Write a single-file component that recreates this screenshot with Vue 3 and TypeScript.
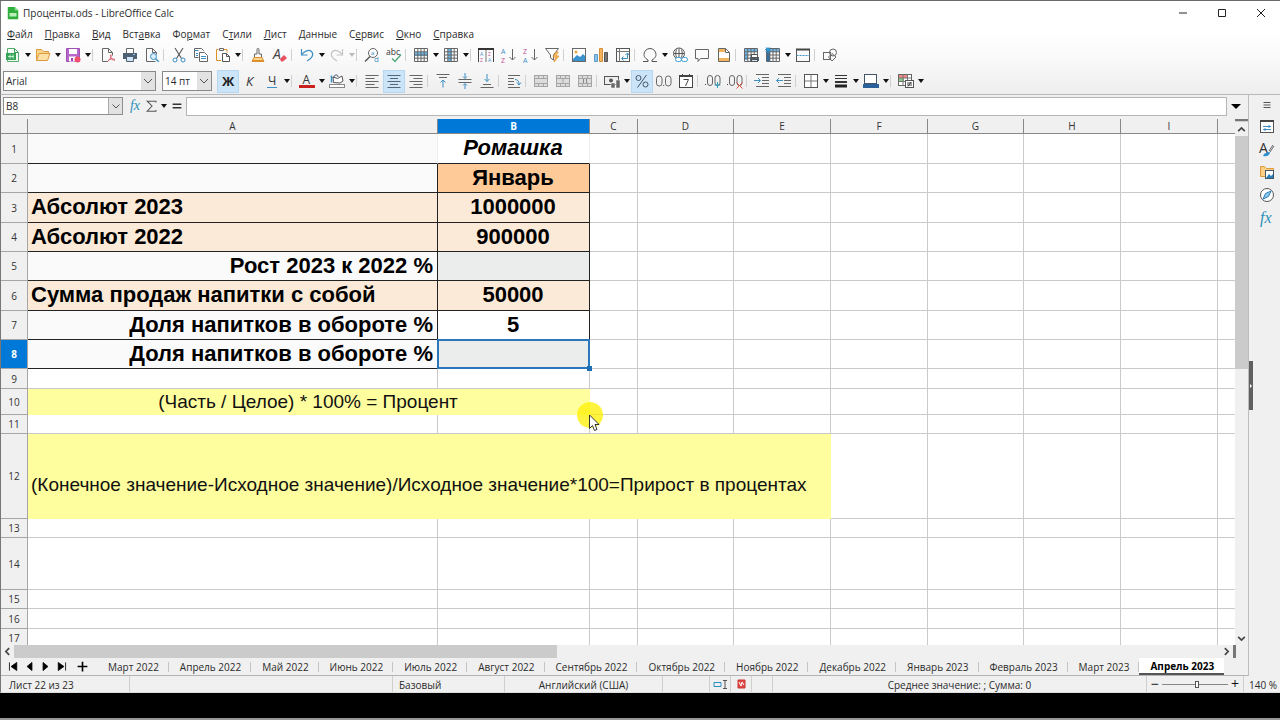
<script setup lang="ts">
import { ref } from 'vue'

interface Tool { icon?: string; label?: string; menu?: boolean; on?: boolean; sep?: boolean; off?: boolean }
interface Cell { text?: string; cls?: string; span?: number }
interface Row { n: number; h: number; cells: Cell[] }

const P = (d: string, c = '#555', w = 1, f = 'none') => `<path d="${d}" stroke="${c}" stroke-width="${w}" fill="${f}"/>`
const R = (x: number, y: number, w: number, h: number, c = '#555', f = 'none') =>
  `<rect x="${x}" y="${y}" width="${w}" height="${h}" stroke="${c}" fill="${f}"/>`
const T = (x: number, y: number, s: number, t: string, c = '#444', extra = '') =>
  `<text x="${x}" y="${y}" font-size="${s}" font-family="Open Sans, sans-serif" fill="${c}" ${extra}>${t}</text>`
const BLUE = '#3d8fc4'
const gridLines = P('M1.5 1.5h13v13h-13zM1.5 4.8h13M1.5 8h13M1.5 11.2h13M4.8 1.5v13M8 1.5v13M11.2 1.5v13', '#666')
const merge = R(1.5, 2.5, 13, 11, '#a5a5a5', '#dcdcdc') + P('M1.5 5.5h13M1.5 10.5h13M5.5 2.5v3M10.5 2.5v3M5.5 10.5v3M10.5 10.5v3', '#a5a5a5')

const icons: Record<string, string> = {
  new: P('M2.5 1.5h7l4 4v9h-11z', '#5aa96f', 1, '#f2fbf4') + P('M9.5 1.5v4h4', '#2f9e52') + '<path d="M1 6h10v7H1z" fill="#35a457"/>' + P('M3 9.500h6M5 7.500v4M8 7.500v4', '#c9efd2'),
  open: P('M1.500 13.500v-11h5l2 2h5v2', '#dd9a3c', 1, '#fbd58c') + P('M1.500 13.500l2.500-7h11l-2.500 7z', '#dd9a3c', 1, '#fde0a6'),
  save: P('M1.500 1.500h13v13h-13z', '#a04fb5', 1, '#b668ca') + '<path d="M4 2h8v5H4zM4 9.500h7v5H4z" fill="#fff"/><path d="M6 11h2v3H6z" fill="#9a3fae"/><circle cx="12.500" cy="12.500" r="3" fill="#f0506e"/>',
  pdf: P('M8 14.500h-5.500v-13h6l4 4v3M8.500 1.500v4h4', '#666') + P('M7.500 14.500c3-2 4-5 3.500-7M10.500 8c0 4 2 5.500 4.500 5M8 13.500c2-2 5-2 7-1', '#d8606c'),
  print: '<path d="M1 6h14v6H1z" fill="#4f6070"/>' + P('M4.500 6V1.500h7V6', '#666', 1, '#fff') + P('M4.500 9.500h7v5h-7z', '#4f6070', 1, '#cfe4f4') + '<path d="M11 7h2v1h-2z" fill="#7fd1ff"/>',
  preview: P('M11.500 14.500h-9v-13h6l4 4v2M8.500 1.500v4h4', '#666') + '<circle cx="9.500" cy="9.500" r="3" fill="#d8eefa" stroke="#3d8fc4"/>' + P('M11.700 11.700l3 3', BLUE, 1.500),
  cut: P('M4 1l6.500 10.500M12 1L5.500 11.500', '#555', 1.100) + '<circle cx="4" cy="13" r="2" fill="none" stroke="#3d8fc4"/><circle cx="12" cy="13" r="2" fill="none" stroke="#3d8fc4"/>',
  copy: P('M10.500 4V3.500l-2-2h-7v9h4', '#666') + P('M1.500 3.500h4M3 6.500h2M3 8.500h2', BLUE) + P('M6.500 5.500h5l3 3v6h-8z', '#666', 1, '#fff') + P('M8 9.500h5M8 11.500h5', BLUE),
  paste: P('M6 13.500H1.500v-11h2M9 2.500h3v3', '#dd8f2c') + P('M4.500 1.500h4v2h-4z', '#666') + P('M7.500 6.500h4l3 3v5h-7zM11.500 6.500v3h3', '#555', 1, '#fff'),
  clone: P('M7 7V2.500a1 1 0 012 0V7h2.500v3.500h-7V7z', '#666') + P('M4 10.500l-2 4h12l-2-4z', '#dd8f2c', 1, '#fbd58c') + P('M2 13.500h12', '#dd8f2c', 1),
  clear: T(1, 12, 14, 'A', '#444', 'font-style="italic"') + '<path d="M8 12l4-4 3 3-4 3.500h-2z" fill="#e8505f"/>',
  undo: P('M2.500 2v6h6', BLUE, 1.200) + P('M2.500 8C5 4 10 2 12.500 4.500s1 7-4.500 9.500', BLUE, 1.200),
  redo: P('M13.500 2v6h-6', '#c4c4c4', 1.200) + P('M13.500 8C11 4 6 2 3.500 4.500s-1 7 4.500 9.500', '#c4c4c4', 1.200),
  find: '<circle cx="9" cy="6" r="4.500" fill="none" stroke="#666"/>' + P('M6 9.500l-5 5', '#555', 1.500) + T(7, 8, 6, 'a', BLUE) + T(10, 15, 8, 'd', BLUE),
  spell: T(0, 8, 8.5, 'abc', '#333') + P('M6 11.500l3 3 6-7', '#4aa878', 1.300),
  rows: '<path d="M2 5h12v4H2z" fill="#6db9ea"/>' + gridLines,
  cols: '<path d="M5 2h4v12H5z" fill="#6db9ea"/>' + gridLines,
  sort: P('M.5 15V2.500h15V15', '#444') + P('M0 2h16', '#333', 2) + P('M8 3v12', '#777') + T(2, 8.5, 5, 'A', BLUE) + T(2, 15, 5, 'Z', '#c6529a') + T(10, 8.5, 5, 'Z', '#c6529a') + T(10, 15, 5, 'A', BLUE),
  asc: T(1, 6.500, 7, 'A', BLUE) + T(1, 15.500, 7, 'Z', '#c6529a') + P('M12.500 2v11M9.500 10l3 3 3-3', '#666'),
  desc: T(1, 6.500, 7, 'Z', '#c6529a') + T(1, 15.500, 7, 'A', BLUE) + P('M12.500 2v11M9.500 10l3 3 3-3', '#666'),
  filter: P('M1.500 1.500h13l-5 6.500v5l-3-2V8z', '#666') + P('M12 5l-3 5h3l-2 5 5-6h-3l2-4z', '#dd8f2c', .8, '#fbc46a'),
  image: R(1.5, 1.5, 13, 13, '#666', '#fff') + '<path d="M2 12l4-4 3 2L12 7l2 2v5H2z" fill="#3a92cf"/><circle cx="5" cy="5" r="1.500" fill="#f1a33c"/>',
  chart: '<path d="M1.500 7.500h3v7h-3z" fill="#8bc3ea" stroke="#5a9cc8"/><path d="M6.500 1.500h3v13h-3z" fill="#f4b35c" stroke="#d08f3a"/><path d="M11.500 5.500h3v9h-3z" fill="#777" stroke="#555"/>',
  pivot: R(1.5, 1.5, 13, 13) + P('M1.500 4.500h13M4.500 1.500v13', '#777') + P('M7 11.500h5.500V6.500M10.500 8l2-2 1.500 2M8.500 9.500l-2 2 2 2', BLUE),
  omega: P('M1 14.500h5v-1.500C2.500 11 2 9 2 7.500a6 6 0 0112 0c0 1.500-.5 3.500-4 5.500v1.500h5', '#555', 1),
  link: '<circle cx="7" cy="6.500" r="5.500" fill="#fff" stroke="#555"/>' + P('M2 6.500h10M7 1.500v10M4.500 2.500c-1 3-1 5 0 8M9.500 2.500c1 3 1 5 0 8', '#555') + '<rect x="3.500" y="10.500" width="6" height="4" rx="2" fill="#fff" stroke="#3d9fd4"/><rect x="9.500" y="10.500" width="6" height="4" rx="2" fill="#fff" stroke="#3d9fd4"/>',
  comment: P('M1.500 2.500h13v9h-8l-2.500 3v-3h-2.500z', '#666'),
  header: P('M2.500 1.500h7l4 4v9h-11z', '#666', 1, '#fff') + '<path d="M3 2h6v3H3zM3 11h10v3H3z" fill="#f0b45c"/>' + P('M9.500 1.500v4h4', '#666'),
  area: '<path d="M2 2h12v3H2zM2 2h3v11H2z" fill="#6db9ea"/>' + gridLines + '<path d="M7 10h9v4H7z" fill="#4f6070"/>' + R(8.5, 7.5, 6, 3, '#555', '#fff') + R(8.5, 12.5, 6, 2, '#555', '#cfe4f4'),
  freeze: '<path d="M2 2h3v12H2z" fill="#1e74b8"/><path d="M5 2h9v3H5z" fill="#6db9ea"/>' + gridLines + P('M3 0v6M0 2.500h6M1 .5l4 4M5 .5l-4 4', '#2a9fe0'),
  split: R(1.5, 2.5, 13, 12) + P('M1 2.500h14', '#444', 2) + '<path d="M1.500 8.500h13" stroke="#3d8fc4" stroke-dasharray="2 1"/>',
  draw: R(1.5, 5.5, 7, 7, '#666') + '<circle cx="11" cy="5.500" r="3.500" fill="none" stroke="#666"/>' + P('M10 6.500l4 3.500-4 4-3.500-4z', '#666'),
  bold: T(2, 12.5, 13, 'Ж', '#222', 'font-weight="700"'),
  italic: T(4, 12.5, 13, 'К', '#333', 'font-style="italic"'),
  underline: T(4, 12, 12, 'Ч', '#333') + P('M3 14.500h10', BLUE),
  fcolor: T(3.5, 11, 12, 'A', '#333') + '<path d="M0 12h16v3H0z" fill="#c9211e"/>',
  bcolor: P('M4 4l4.500 1.500L13 3l1 5-3 2-6.500-.5z', '#555', 1, '#fff') + P('M2.500 2.500v7', '#3d8fc4', 1.5) + P('M4 5c2-4 5-4 5-1', '#456') + R(.5, 11.5, 15, 3, '#888', '#fff'),
  left: P('M1.500 2.500h13M1.500 5.500h9M1.500 8.500h13M1.500 11.500h9M1.500 14.500h13', '#666'),
  center: P('M1.500 2.500h13M4 5.500h8M1.500 8.500h13M4 11.500h8M1.500 14.500h13', '#567'),
  right: P('M1.500 2.500h13M5.500 5.500h9M1.500 8.500h13M5.500 11.500h9M1.500 14.500h13', '#666'),
  top: P('M1.500 1.500h13M4 4.500h8', '#666') + P('M8 14.500V7M5.500 9.500L8 7l2.500 2.500', BLUE),
  mid: P('M1.500 6.500h13M1.500 9.500h13', '#666') + P('M8 0v5M6 3.500l2 2 2-2M8 16v-5M6 12.500l2-2 2 2', BLUE),
  bot: P('M4 11.500h8M1.500 14.500h13', '#666') + P('M8 1v7.500M5.500 6L8 8.500 10.500 6', BLUE),
  wrap: P('M2 2.500h12M2 5.500h6M2 8.500h6M2 11.500h6M2 14.500h12', '#666') + P('M9 6.500c3 0 4 2 4 5M11 9.500l2 2.500 2-2.500', BLUE),
  merge, merge2: merge + P('M8 6v4', '#a5a5a5'), merge3: merge + P('M6.500 6v4M9.500 6v4', '#888'),
  money: R(.5, 3.5, 14, 8, '#555', '#eee') + '<circle cx="7" cy="7.500" r="2" fill="#555"/><path d="M7 10h4v5H7zM12 7h4v8h-4z" fill="#666" stroke="#fff" stroke-width=".5"/>',
  percent: '<circle cx="4.500" cy="5" r="2.500" fill="none" stroke="#456"/><circle cx="11.500" cy="11.500" r="2.500" fill="none" stroke="#456"/>' + P('M12.500 2l-9 12.500', '#456'),
  number: '<rect x=".5" y="3" width="5.500" height="10" rx="2.700" fill="none" stroke="#666"/><rect x="9.500" y="3" width="5.500" height="10" rx="2.700" fill="none" stroke="#666"/><path d="M7.200 12h1v1h-1z" fill="#444"/>',
  date: R(1.5, 2.5, 13, 12, '#444', '#fff') + P('M1 3h14', '#444', 2) + P('M4.500 1v3M11.500 1v3', '#444') + P('M5.500 6.500h5l-3 6.500', '#444'),
  adddec: '<path d="M0 11h1v1H0z" fill="#444"/><rect x="2.500" y="2.500" width="5" height="10" rx="2.500" fill="none" stroke="#666"/><rect x="10" y="2.500" width="5" height="10" rx="2.500" fill="none" stroke="#666"/>' + P('M12.500 9v6M9.500 12h6', '#2a9fc0'),
  deldec: '<path d="M0 11h1v1H0z" fill="#444"/><rect x="2.500" y="2.500" width="5" height="10" rx="2.500" fill="none" stroke="#666"/><rect x="10" y="2.500" width="5" height="10" rx="2.500" fill="none" stroke="#666"/>' + P('M9.500 9.500l6 6M15.500 9.500l-6 6', '#e0503f'),
  indent: P('M2 1.500h13M8 4.500h7M8 7.500h7M8 10.500h7M2 13.500h13', '#666') + P('M0 7.500h6M4 5l2.500 2.500L4 10', BLUE),
  dedent: P('M2 1.500h13M8 4.500h7M8 7.500h7M8 10.500h7M2 13.500h13', '#666') + P('M7 7.500H.5M3 5L.5 7.500 3 10', BLUE),
  borders: R(1.5, 1.5, 13, 13, '#555', '#fff') + P('M8 2v12M2 8h12', '#777'),
  style: P('M2 2.500h12M2 5.500h12', '#333') + P('M2 9h12', '#333', 2) + P('M2 13h12', '#222', 3),
  bordercolor: R(1.5, 1.5, 12, 9, '#456', '#fff') + '<path d="M0 11h16v4H0z" fill="#2a6099"/>',
  cond: R(.5, 1.5, 13, 11, '#666', '#fff') + '<path d="M1 2h9v3H1z" fill="#e88"/><path d="M1 5h5v3H1z" fill="#8c8"/>' + P('M.5 5h13M.5 8.500h13M5 1.500v11M9.500 1.500v11', '#777') + R(7.5, 7.5, 8, 7, '#555', '#fff') + P('M9 10h5M9 12h5M13 9l-3 4.500', '#444'),
  menu: P('M4.500 5.500h7M4.500 8h7M4.500 10.500h7', '#555'),
  props: R(1.5, 2.5, 13, 12, '#555', '#fff') + P('M1 3h14', '#444', 2) + P('M4 8.500h8M4 11.500h8M10 7v3M6 10v3', BLUE),
  styles: T(0, 12, 14, 'A', '#333') + P('M15 5l-4 6M14 4l-4 6', '#666') + '<path d="M4 15c1-3 4-4 7-4 0 3-3 5-7 4z" fill="#2a8fd0"/>',
  gallery: P('M1.500 12.500v-10h4l2 2h7v8z', '#dd9a3c', 1, '#fbcf85') + R(6.5, 6.5, 8, 8, '#456', '#fff') + '<path d="M7 14l3-4 2 2 2-2v4z" fill="#2a7fb8"/>',
  navigator: '<circle cx="8" cy="8" r="6.500" fill="#fff" stroke="#555"/>' + P('M12 4l-2.500 5.500L4 12l2.500-5.500z', '#2a7fb8', 1, '#8fc7ea'),
  fx: `<text x="1" y="13" font-size="16" font-style="italic" font-family="Liberation Serif, serif" fill="#2a8fb8">fx</text>`,
  sum: P('M12.500 4V2.500h-10l5.500 5.500-5.500 6h10v-1.500', '#555', 1.2),
  equals: P('M3 6h10M3 10h10', '#333', 1.5),
}

const sep: Tool = { sep: true }
const t = (icon: string, label: string, menu = false): Tool => ({ icon, label, menu })
const standard: Tool[] = [
  t('new', 'Создать', true), t('open', 'Открыть', true), t('save', 'Сохранить', true), sep,
  t('pdf', 'PDF'), t('print', 'Печать'), t('preview', 'Просмотр'), sep,
  t('cut', 'Вырезать'), t('copy', 'Копировать'), t('paste', 'Вставить', true), sep,
  t('clone', 'Копировать формат'), t('clear', 'Очистить'), sep,
  t('undo', 'Отменить', true), { icon: 'redo', label: 'Вернуть', menu: true, off: true }, sep,
  t('find', 'Найти'), t('spell', 'Орфография'), sep,
  t('rows', 'Строка', true), t('cols', 'Столбец', true), sep,
  t('sort', 'Сортировка'), t('asc', 'По возрастанию'), t('desc', 'По убыванию'), t('filter', 'Автофильтр'), sep,
  t('image', 'Изображение'), t('chart', 'Диаграмма'), t('pivot', 'Сводная таблица'), sep,
  t('omega', 'Символ', true), t('link', 'Гиперссылка'), t('comment', 'Комментарий'), t('header', 'Колонтитулы'), sep,
  t('area', 'Область печати'), t('freeze', 'Закрепить', true), t('split', 'Разбить окно'), sep, t('draw', 'Рисование'),
]
const formatting: Tool[] = [
  { icon: 'bold', label: 'Жирный', on: true }, t('italic', 'Курсив'), t('underline', 'Подчёркнутый', true), sep,
  t('fcolor', 'Цвет шрифта', true), t('bcolor', 'Цвет фона', true), sep,
  t('left', 'По левому краю'), { icon: 'center', label: 'По центру', on: true }, t('right', 'По правому краю'), sep,
  t('top', 'По верху'), t('mid', 'По середине'), t('bot', 'По низу'), sep,
  t('wrap', 'Перенос'), sep,
  t('merge', 'Объединить'), t('merge2', 'Объединить ячейки'), t('merge3', 'Разъединить'), sep,
  t('money', 'Денежный', true), { icon: 'percent', label: 'Процентный', on: true }, t('number', 'Числовой'), t('date', 'Дата'), sep,
  t('adddec', 'Добавить разряд'), t('deldec', 'Удалить разряд'), sep,
  t('indent', 'Увеличить отступ'), t('dedent', 'Уменьшить отступ'), sep,
  t('borders', 'Обрамление', true), t('style', 'Стиль линий', true), t('bordercolor', 'Цвет линий', true), sep,
  t('cond', 'Условное форматирование', true),
]
// [before, access key, after]
const menus = [
  ['', 'Ф', 'айл'], ['', 'П', 'равка'], ['', 'В', 'ид'], ['Вст', 'а', 'вка'], ['Фо', 'р', 'мат'], ['С', 'т', 'или'],
  ['', 'Л', 'ист'], ['', 'Д', 'анные'], ['С', 'е', 'рвис'], ['', 'О', 'кно'], ['', 'С', 'правка'],
]
const columns = ['A', 'B', 'C', 'D', 'E', 'F', 'G', 'H', 'I', '']
const e = (n: number): Cell[] => Array.from({ length: n }, () => ({}))
const rows: Row[] = [
  { n: 1, h: 30, cells: [{ cls: 'light framed-b' }, { text: 'Ромашка', cls: 'big mid it framed-b' }, ...e(8)] },
  { n: 2, h: 29, cells: [{ cls: 'light framed' }, { text: 'Январь', cls: 'big mid orange framed' }, ...e(8)] },
  { n: 3, h: 30, cells: [{ text: 'Абсолют 2023', cls: 'big peach framed' }, { text: '1000000', cls: 'big mid peach framed' }, ...e(8)] },
  { n: 4, h: 29, cells: [{ text: 'Абсолют 2022', cls: 'big peach framed' }, { text: '900000', cls: 'big mid peach framed' }, ...e(8)] },
  { n: 5, h: 29, cells: [{ text: 'Рост 2023 к 2022 %', cls: 'big end light framed' }, { cls: 'grey framed' }, ...e(8)] },
  { n: 6, h: 30, cells: [{ text: 'Сумма продаж напитки с собой', cls: 'big peach framed' }, { text: '50000', cls: 'big mid peach framed' }, ...e(8)] },
  { n: 7, h: 29, cells: [{ text: 'Доля напитков в обороте %', cls: 'big end light framed' }, { text: '5', cls: 'big mid framed' }, ...e(8)] },
  { n: 8, h: 29, cells: [{ text: 'Доля напитков в обороте %', cls: 'big end light framed' }, { cls: 'grey framed current' }, ...e(8)] },
  { n: 9, h: 20, cells: e(10) },
  { n: 10, h: 26, cells: [{ text: '(Часть / Целое) * 100% = Процент', cls: 'note mid', span: 2 }, ...e(8)] },
  { n: 11, h: 19, cells: e(10) },
  { n: 12, h: 85, cells: [{ text: '(Конечное значение-Исходное значение)/Исходное значение*100=Прирост в процентах', cls: 'note low', span: 5 }, ...e(5)] },
  { n: 13, h: 19, cells: e(10) },
  { n: 14, h: 52, cells: e(10) },
  { n: 15, h: 19, cells: e(10) },
  { n: 16, h: 20, cells: e(10) },
  { n: 17, h: 19, cells: e(10) },
]
const sheets = ['Март 2022', 'Апрель 2022', 'Май 2022', 'Июнь 2022', 'Июль 2022', 'Август 2022', 'Сентябрь 2022', 'Октябрь 2022',
  'Ноябрь 2022', 'Декабрь 2022', 'Январь 2023', 'Февраль 2023', 'Март 2023', 'Апрель 2023']
const activeSheet = ref('Апрель 2023')
const side = [['menu', 'Меню'], ['props', 'Свойства'], ['styles', 'Стили'], ['gallery', 'Галерея'], ['navigator', 'Навигатор'], ['fx', 'Функции']]
const nav = [
  ['Первый лист', 'M3 3v10M12 3v10L5 8z'], ['Предыдущий лист', 'M11 3v10L5 8z'],
  ['Следующий лист', 'M5 3v10l6-5z'], ['Последний лист', 'M4 3v10l7-5zM13 3v10'],
]
const zoom = ref(54)
const address = ref('B8')
const formula = ref('')
</script>

<template>
  <div class="window">
    <header class="chrome">
      <div class="title">
        <svg class="doc" viewBox="0 0 16 16"><path d="M2 1h8l4 4v10H2z" fill="#2fae3e" /><path d="M10 1v4h4z" fill="#8be08f" /><path d="M4 8h8v4H4z" fill="#b8f0b8" /></svg>
        <span class="name">Проценты.ods - LibreOffice Calc</span>
        <button class="win" aria-label="Свернуть"><svg viewBox="0 0 12 12"><path d="M2 6h8" /></svg></button>
        <button class="win" aria-label="Развернуть"><svg viewBox="0 0 12 12"><path d="M2.500 2.500h7v7h-7z" /></svg></button>
        <button class="win" aria-label="Закрыть"><svg viewBox="0 0 12 12"><path d="M2 2l8 8M10 2l-8 8" /></svg></button>
      </div>
      <nav class="menus">
        <button v-for="m in menus" :key="m.join('')">{{ m[0] }}<u>{{ m[1] }}</u>{{ m[2] }}</button>
      </nav>
      <div class="bar">
        <template v-for="(i, k) in standard" :key="k">
          <span v-if="i.sep" class="sep"></span>
          <template v-else>
            <button class="tool" :aria-label="i.label"><svg viewBox="0 0 16 16" v-html="icons[i.icon!]"></svg></button>
            <button v-if="i.menu" class="drop" :class="{ off: i.off }" :aria-label="i.label + ': меню'"></button>
          </template>
        </template>
      </div>
      <div class="bar second">
        <select class="combo font" aria-label="Шрифт"><option>Arial</option></select>
        <select class="combo size" aria-label="Размер шрифта"><option>14 пт</option></select>
        <template v-for="(i, k) in formatting" :key="k">
          <span v-if="i.sep" class="sep"></span>
          <template v-else>
            <button class="tool" :class="{ on: i.on }" :aria-label="i.label"><svg viewBox="0 0 16 16" v-html="icons[i.icon!]"></svg></button>
            <button v-if="i.menu" class="drop" :aria-label="i.label + ': меню'"></button>
          </template>
        </template>
      </div>
    </header>

    <div class="work">
      <main class="main">
        <div class="formula">
          <div class="address">
            <input v-model="address" aria-label="Адрес ячейки">
            <button aria-label="Список имён"><svg viewBox="0 0 10 10"><path d="M1.500 3.500L5 7l3.500-3.500" /></svg></button>
          </div>
          <button class="fn" aria-label="Мастер функций"><svg viewBox="0 0 16 16" v-html="icons.fx"></svg></button>
          <button class="fn" aria-label="Сумма"><svg viewBox="0 0 16 16" v-html="icons.sum"></svg></button>
          <button class="drop" aria-label="Выбор функции"></button>
          <button class="fn eq" aria-label="Формула"><svg viewBox="0 0 16 16" v-html="icons.equals"></svg></button>
          <input v-model="formula" class="line" aria-label="Строка ввода">
          <button class="expand" aria-label="Развернуть строку"></button>
        </div>

        <div class="view">
          <div class="sheet">
            <table>
              <colgroup>
                <col class="c-head"><col class="c-a"><col class="c-b"><col class="c-c">
                <col class="c-s"><col class="c-n"><col class="c-n"><col class="c-s"><col class="c-n"><col class="c-n"><col>
              </colgroup>
              <thead>
                <tr><th></th><th v-for="c in columns" :key="c" scope="col" :class="{ sel: c === 'B' }">{{ c }}</th></tr>
              </thead>
              <tbody>
                <tr v-for="r in rows" :key="r.n" :style="{ height: r.h + 'px' }">
                  <th scope="row" :class="{ sel: r.n === 8 }">{{ r.n }}</th>
                  <td v-for="(c, k) in r.cells" :key="k" :class="c.cls" :colspan="c.span">{{ c.text }}</td>
                </tr>
              </tbody>
            </table>
            <div class="pointer">
              <svg viewBox="0 0 32 36"><circle cx="15" cy="14" r="13" fill="#fdf000" opacity=".75" /><path d="M14.500 14v13.500l3-3 2 5 2.500-1-2-5h4z" fill="#fff" stroke="#333" /></svg>
            </div>
          </div>
          <div class="vscroll">
            <span class="splitter"></span>
            <button aria-label="Вверх"><svg viewBox="0 0 10 10"><path d="M2 6.500l3-3 3 3" /></svg></button>
            <span class="track"><span class="thumb"></span></span>
            <button aria-label="Вниз"><svg viewBox="0 0 10 10"><path d="M2 3.500l3 3 3-3" /></svg></button>
          </div>
        </div>

        <div class="hscroll">
          <button aria-label="Влево"><svg viewBox="0 0 10 10"><path d="M6.500 2l-3 3 3 3" /></svg></button>
          <span class="track"><span class="thumb"></span></span>
          <button aria-label="Вправо"><svg viewBox="0 0 10 10"><path d="M3.500 2l3 3-3 3" /></svg></button>
          <span class="splitter"></span>
        </div>

        <div class="tabs">
          <button v-for="n in nav" :key="n[0]" class="nav" :aria-label="n[0]"><svg viewBox="0 0 16 16"><path :d="n[1]" /></svg></button>
          <button class="nav add" aria-label="Добавить лист"><svg viewBox="0 0 16 16"><path d="M8 2v12M2 8h12" /></svg></button>
          <button v-for="s in sheets" :key="s" class="tab" :class="{ active: s === activeSheet }" @click="activeSheet = s">{{ s }}</button>
        </div>
      </main>
      <aside class="side">
        <button v-for="s in side" :key="s[0]" :aria-label="s[1]"><svg viewBox="0 0 16 16" v-html="icons[s[0]]"></svg></button>
        <span class="handle"></span>
      </aside>
    </div>

    <footer class="status">
      <span class="s-sheet">Лист 22 из 23</span>
      <span class="s-find"></span>
      <span class="s-style">Базовый</span>
      <span class="s-lang">Английский (США)</span>
      <span class="s-gap"></span>
      <span class="s-icon"><svg viewBox="0 0 16 12"><path d="M2 4.500h7v4h-7z" stroke="#2a8fc0" fill="none" /><path d="M11 2.500h4M11 10.500h4M13 2.500v8" stroke="#555" /></svg></span>
      <span class="s-icon"><svg viewBox="0 0 16 12"><path d="M5 2h7v8H5z" fill="#e04848" stroke="#c33" /><path d="M6 4l2 4 1-4 2 3" stroke="#fff" fill="none" /></svg></span>
      <span class="s-icon"></span>
      <span class="s-sum">Среднее значение: ; Сумма: 0</span>
      <span class="s-zoom">
        <button aria-label="Уменьшить">−</button>
        <input v-model="zoom" type="range" min="0" max="100" aria-label="Масштаб">
        <button aria-label="Увеличить">+</button>
      </span>
      <span class="s-percent">140 %</span>
    </footer>
    <div class="below"></div>
  </div>
</template>

<style>
body { background: #000; }
</style>

<style scoped>
* { box-sizing: border-box; }
.window { height: 100vh; display: flex; flex-direction: column; border-top: 1px solid #6a6a6a; background: #f0f0f0; font: 10px/14px "Open Sans", "Noto Sans", sans-serif; color: #2b2b2b; overflow: hidden; }
button { border: 0; padding: 0; background: none; font: inherit; color: inherit; display: flex; align-items: center; justify-content: center; flex: none; }
svg { display: block; fill: none; overflow: visible; }
input, select { font: inherit; color: inherit; border-radius: 0; outline: 0; }

.chrome { flex: none; background: linear-gradient(#fff 30%, #fafafa 60%, #eee); border-bottom: 1px solid #b8b8b8; border-left: 1px solid #777; }
.title { height: 24px; display: flex; align-items: center; padding-left: 5px; }
.doc { width: 14px; height: 14px; }
.name { flex: 1; padding-left: 3px; }
.win { width: 39px; height: 24px; }
.win svg { width: 12px; height: 12px; stroke: #222; }
.menus { height: 18px; display: flex; align-items: center; gap: 12px; padding-left: 6px; }
.bar { height: 24px; display: flex; align-items: center; padding-left: 1px; }
.second { height: 27px; padding-top: 1px; }
.tool { width: 22px; height: 23px; }
.tool svg { width: 16px; height: 16px; }
.on { background: #cce4f7; box-shadow: inset 0 0 0 1px #b4d8f4; }
.drop { width: 8px; height: 20px; }
.drop::after { content: ""; border: 3px solid transparent; border-top: 4px solid #111; border-bottom: 0; }
.off::after { border-top-color: #bbb; }
.sep { width: 5px; height: 12px; border-left: 1px solid #d0d0d0; flex: none; }
.combo { height: 20px; border: 1px solid #8a8a8a; padding: 0 0 0 2px; appearance: none; background-color: #fff; background-image: linear-gradient(45deg, transparent 45%, #555 45%, #555 60%, transparent 60%), linear-gradient(-45deg, transparent 45%, #555 45%, #555 60%, transparent 60%), linear-gradient(#e2e2e2, #e2e2e2); background-repeat: no-repeat; background-size: 4px 4px, 4px 4px, 14px 100%; background-position: right 7px center, right 3px center, right; }
.font { width: 153px; margin-left: 1px; }
.size { width: 50px; margin: 0 5px 0 6px; }

.work { flex: 1; min-height: 0; display: flex; }
.main { flex: 1; min-width: 0; display: flex; flex-direction: column; border-right: 1px solid #bdbdbd; border-left: 1px solid #777; }
.formula { flex: none; height: 24px; display: flex; align-items: center; padding: 0 4px 2px 2px; }
.address { width: 120px; height: 18px; display: flex; border: 1px solid #8f8f8f; background: #fff; margin-right: 5px; }
.address input { flex: 1; min-width: 0; border: 0; padding: 0 2px; }
.address button { width: 14px; background: #e2e2e2; border-left: 1px solid #aaa; }
.address svg { width: 10px; height: 10px; stroke: #555; }
.fn { width: 16px; height: 18px; }
.fn svg { width: 14px; height: 14px; }
.eq { margin: 0 1px; }
.line { flex: 1; min-width: 0; height: 19px; border: 1px solid #b5b5b5; background: #fff; }
.expand { width: 17px; height: 18px; }
.expand::after { content: ""; border: 5px solid transparent; border-top: 5px solid #000; border-bottom: 0; }

.view { flex: 1; min-height: 0; display: flex; }
.sheet { flex: 1; min-width: 0; overflow: hidden; position: relative; background: #fff; }
table { width: 100%; table-layout: fixed; border-collapse: separate; border-spacing: 0; }
.c-head { width: 27px; } .c-a { width: 410px; } .c-b { width: 152px; } .c-c { width: 48px; } .c-n { width: 97px; } .c-s { width: 96px; }
th { padding: 0; font-weight: 400; line-height: 14px; background: #f0f0f0; border-right: 1px solid #a6a6a6; border-bottom: 1px solid #a6a6a6; color: #333; }
thead th { height: 15px; border-bottom-color: #888; border-right-color: #888; }
th.sel { background: #0078d7; color: #fff; font-weight: 700; }
td { padding: 0 4px 0 3px; border-right: 1px solid #cacaca; border-bottom: 1px solid #cacaca; font-family: "Liberation Sans", Arial, sans-serif; color: #111; white-space: nowrap; line-height: 18px; }
tr > :last-child { border-right: 0; }
.big { font-size: 22px; line-height: 24px; padding-bottom: 1px; font-weight: 700; color: #000; }
.mid { text-align: center; }
.end { text-align: right; }
.it { font-style: italic; }
.light { background: #fafafb; }
.peach { background: #faead7; }
.orange { background: #fdca98; }
.grey { background: #ebecec; }
.framed { border-color: #222; }
.framed-b { border-bottom-color: #222; border-right-color: #eee; }
.note { background: #fefe9f; border-color: #fefe9f; font-size: 19px; }
.low { padding-top: 18px; }
.current { position: relative; }
.current::before { content: ""; position: absolute; inset: -1px; border: 2px solid #2a78bb; }
.current::after { content: ""; position: absolute; right: -3px; bottom: -3px; width: 5px; height: 5px; background: #1c6fb5; }
.pointer { position: absolute; left: 574px; top: 282px; width: 32px; height: 36px; }

.vscroll { width: 13px; flex: none; display: flex; flex-direction: column; }
.vscroll button { height: 14px; }
.vscroll svg, .hscroll svg { width: 11px; height: 11px; stroke: #444; stroke-width: 1.500; }
.vscroll .splitter { height: 3px; background: #777; border-bottom: 1px solid #ccc; }
.vscroll .track { flex: 1; }
.vscroll .thumb { display: block; height: 47%; background: #cbcbcb; }
.hscroll { flex: none; height: 13px; display: flex; padding-right: 12px; }
.hscroll button { width: 13px; }
.hscroll .track { flex: 1; }
.hscroll .thumb { display: block; height: 100%; width: 45%; background: #cbcbcb; }
.hscroll .splitter { width: 3px; background: #777; }

.tabs { flex: none; height: 18px; display: flex; border-bottom: 1px solid #b4b4b4; padding-left: 4px; overflow: hidden; }
.nav { width: 16px; }
.nav svg { width: 13px; height: 13px; fill: #000; stroke: #000; }
.add { width: 26px; margin-right: 2px; }
.add svg { stroke-width: 2; }
.tab { padding: 0 10px 0 11px; position: relative; white-space: nowrap; }
.tab::after { content: ""; position: absolute; right: 0; top: 4px; height: 10px; border-right: 1px solid #c4c4c4; }
.active { background: #fff; font-weight: 700; color: #000; border-bottom: 2px solid #555; }
.active::after { border: 0; }

.side { width: 31px; flex: none; position: relative; display: flex; flex-direction: column; align-items: center; padding-left: 5px; }
.side button { height: 23px; width: 26px; }
.side button:first-child { height: 19px; }
.side svg { width: 16px; height: 16px; }
.handle { position: absolute; left: 0; top: 266px; width: 4px; height: 49px; background: #606060; }
.handle::after { content: ""; position: absolute; left: 1px; top: 23px; border: 2px solid transparent; border-left-color: #fff; border-right: 0; }

.status { flex: none; height: 17px; display: flex; border-left: 1px solid #777; white-space: nowrap; line-height: 18px; border-bottom: 1px solid #ddd; }
.status > span { border-right: 1px solid #cfcfcf; flex: none; }
.s-sheet { width: 129px; padding-left: 8px; }
.s-find { width: 263px; }
.s-style { width: 112px; padding-left: 6px; }
.s-lang { width: 158px; text-align: center; }
.s-gap { width: 47px; }
.s-icon { width: 21px; display: flex; align-items: center; justify-content: center; }
.s-icon svg { width: 16px; height: 12px; }
.status > .s-sum { flex: 1; text-align: center; }
.s-zoom { width: 97px; display: flex; align-items: center; justify-content: center; }
.s-zoom button { width: 14px; font-size: 14px; height: 16px; color: #111; }
.s-zoom input { width: 66px; height: 12px; margin: 0; appearance: none; background: linear-gradient(#888, #888) no-repeat center / 100% 1px; }
.s-zoom input::-webkit-slider-thumb { appearance: none; width: 4px; height: 7px; border: 1px solid #555; background: #fff; }
.status > .s-percent { width: 36px; padding-left: 5px; border: 0; }
.below { flex: none; height: 27px; background: #000; border-bottom: 2px solid #999; }
</style>
